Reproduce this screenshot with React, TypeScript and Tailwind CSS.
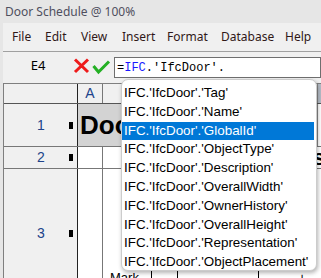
import React from "react";

const items = [
  "Tag",
  "Name",
  "GlobalId",
  "ObjectType",
  "Description",
  "OverallWidth",
  "OwnerHistory",
  "OverallHeight",
  "Representation",
  "ObjectPlacement",
];

const menus: [string, string][] = [
  ["File", "w-[33px]"],
  ["Edit", "w-[36px]"],
  ["View", "w-[41px]"],
  ["Insert", "w-[45px]"],
  ["Format", "w-[54px]"],
  ["Database", "w-[64px]"],
  ["Help", "w-[30px]"],
];

function Marker() {
  return <div className="w-[4px] h-[7px] bg-black shrink-0" />;
}

export default function App() {
  return (
    <div className="w-[321px] h-[278px] overflow-hidden bg-[#e6e6e6] relative flex flex-col">
      {/* Title bar */}
      <div className="h-[23px] shrink-0 flex items-center pl-[5px] text-[12px] text-[#4f4f5e] font-['Noto_Sans',sans-serif]">
        Door Schedule @ 100%
      </div>

      <div className="ml-[3px] flex-1 bg-[#f0f0f0] flex flex-col min-h-0">
        {/* Menu bar */}
        <div className="h-[29px] shrink-0 flex items-center pl-[9px] border-b border-[#a0a0a0] text-[12px] text-[#301818] font-['Noto_Sans',sans-serif]">
          {menus.map(([m, w]) => (
            <span key={m} className={`${w} shrink-0`}>
              {m}
            </span>
          ))}
        </div>

        {/* Formula row */}
        <div className="h-[31px] shrink-0 flex items-start">
          <div className="w-[70px] h-[28px] flex items-center justify-center text-[13px] text-black font-['Noto_Sans',sans-serif]">
            E4
          </div>
          <svg width="17" height="16" viewBox="0 0 17 16" className="mt-[6px] shrink-0">
            <path d="M2 1.5 L15 14 M15 1.5 L2 14" stroke="#ee1b1b" strokeWidth="3" fill="none" />
          </svg>
          <svg width="19" height="15" viewBox="0 0 19 15" className="mt-[8px] ml-[2px] shrink-0">
            <path d="M1.5 6 L6.5 12 L17 1.5" stroke="#24b024" strokeWidth="3" fill="none" />
          </svg>
          <div className="ml-[3px] mt-[5px] h-[21px] flex-1 bg-white border border-[#6f6f6f] flex items-center pl-[2px] text-[12px] font-['Liberation_Mono',monospace] whitespace-nowrap">
            <span className="text-black">=</span>
            <span className="text-[#1a1aff]">IFC</span>
            <span className="text-black">.'IfcDoor'.</span>
          </div>
        </div>

        {/* Grid */}
        <div className="flex-1 border-t border-l border-[#7f7f7f] flex flex-col font-['Liberation_Sans',Arial,sans-serif] min-h-0">
          {/* header row */}
          <div className="h-[20px] shrink-0 flex border-b border-[#555]">
            <div className="w-[74px] border-r border-[#222] bg-[#f0f0f0]" />
            <div className="w-[25px] border-r border-[#777] bg-[#f0f0f0] flex items-center justify-center text-[14px] text-[#20438a]">
              A
            </div>
            <div className="w-[214px] bg-[#f0f0f0]" />
            <div className="flex-1 bg-[#b4bcc6] border-l border-[#888]" />
          </div>
          {/* row 1 */}
          <div className="h-[43px] shrink-0 flex border-b border-[#777]">
            <div className="w-[74px] border-r border-[#222] bg-[#f0f0f0] flex items-center pl-[33px]">
              <span className="w-[8px] text-center text-[14px] text-[#20438a]">1</span>
              <div className="ml-[24px]">
                <Marker />
              </div>
            </div>
            <div className="w-[239px] bg-[#d3d3d3] flex items-center pl-[2px] text-[26px] font-bold text-black leading-none whitespace-nowrap overflow-hidden">
              Door Schedule
            </div>
            <div className="flex-1 bg-white border-l border-[#888]" />
          </div>
          {/* row 2 */}
          <div className="h-[22px] shrink-0 flex border-b border-[#777]">
            <div className="w-[74px] border-r border-[#222] bg-[#f0f0f0] flex items-center pl-[33px]">
              <span className="w-[8px] text-center text-[14px] text-[#20438a]">2</span>
              <div className="ml-[24px]">
                <Marker />
              </div>
            </div>
            <div className="w-[25px] border-r border-[#777] bg-white" />
            <div className="flex-1 bg-white flex items-center pl-[210px] text-[22px] font-bold text-black leading-none overflow-hidden">
              s
            </div>
          </div>
          {/* row 3 */}
          <div className="flex-1 flex min-h-0">
            <div className="w-[74px] border-r border-[#222] bg-[#f0f0f0] flex items-start pt-[56px] pl-[33px]">
              <span className="w-[8px] text-center text-[14px] text-[#20438a] leading-[16px]">3</span>
              <div className="ml-[24px] mt-[5px]">
                <Marker />
              </div>
            </div>
            <div className="w-[25px] border-r border-[#777] bg-white" />
            <div className="flex-1 bg-white pt-[99px] pl-[7px] flex items-start text-[13px] text-black whitespace-nowrap">
              <span className="w-[41px] shrink-0">Mark</span>
              <div className="w-[26px] h-[20px] border-l border-black shrink-0" />
              <div className="w-[81px] h-[20px] border-l border-black shrink-0" />
              <div className="w-[40px] h-[20px] border-l border-black shrink-0" />
              <span className="text-[14px]">+</span>
            </div>
          </div>
        </div>
      </div>

      {/* Autocomplete popup */}
      <div className="absolute left-[121px] top-[79px] w-[196px] h-[192px] bg-white border border-[#cccccc] rounded-[7px] shadow-[1px_2px_4px_rgba(0,0,0,0.3)] overflow-hidden pt-[4px] font-['Liberation_Sans',Arial,sans-serif] text-[13.4px]">
        {items.map((it) => {
          const sel = it === "GlobalId";
          return (
            <div
              key={it}
              className={`h-[18.8px] leading-[18.8px] pl-[2px] mr-[2px] whitespace-nowrap ${
                sel ? "bg-[#0078d7] text-white" : "text-black"
              }`}
            >
              IFC.'IfcDoor'.'{it}'
            </div>
          );
        })}
      </div>
    </div>
  );
}
